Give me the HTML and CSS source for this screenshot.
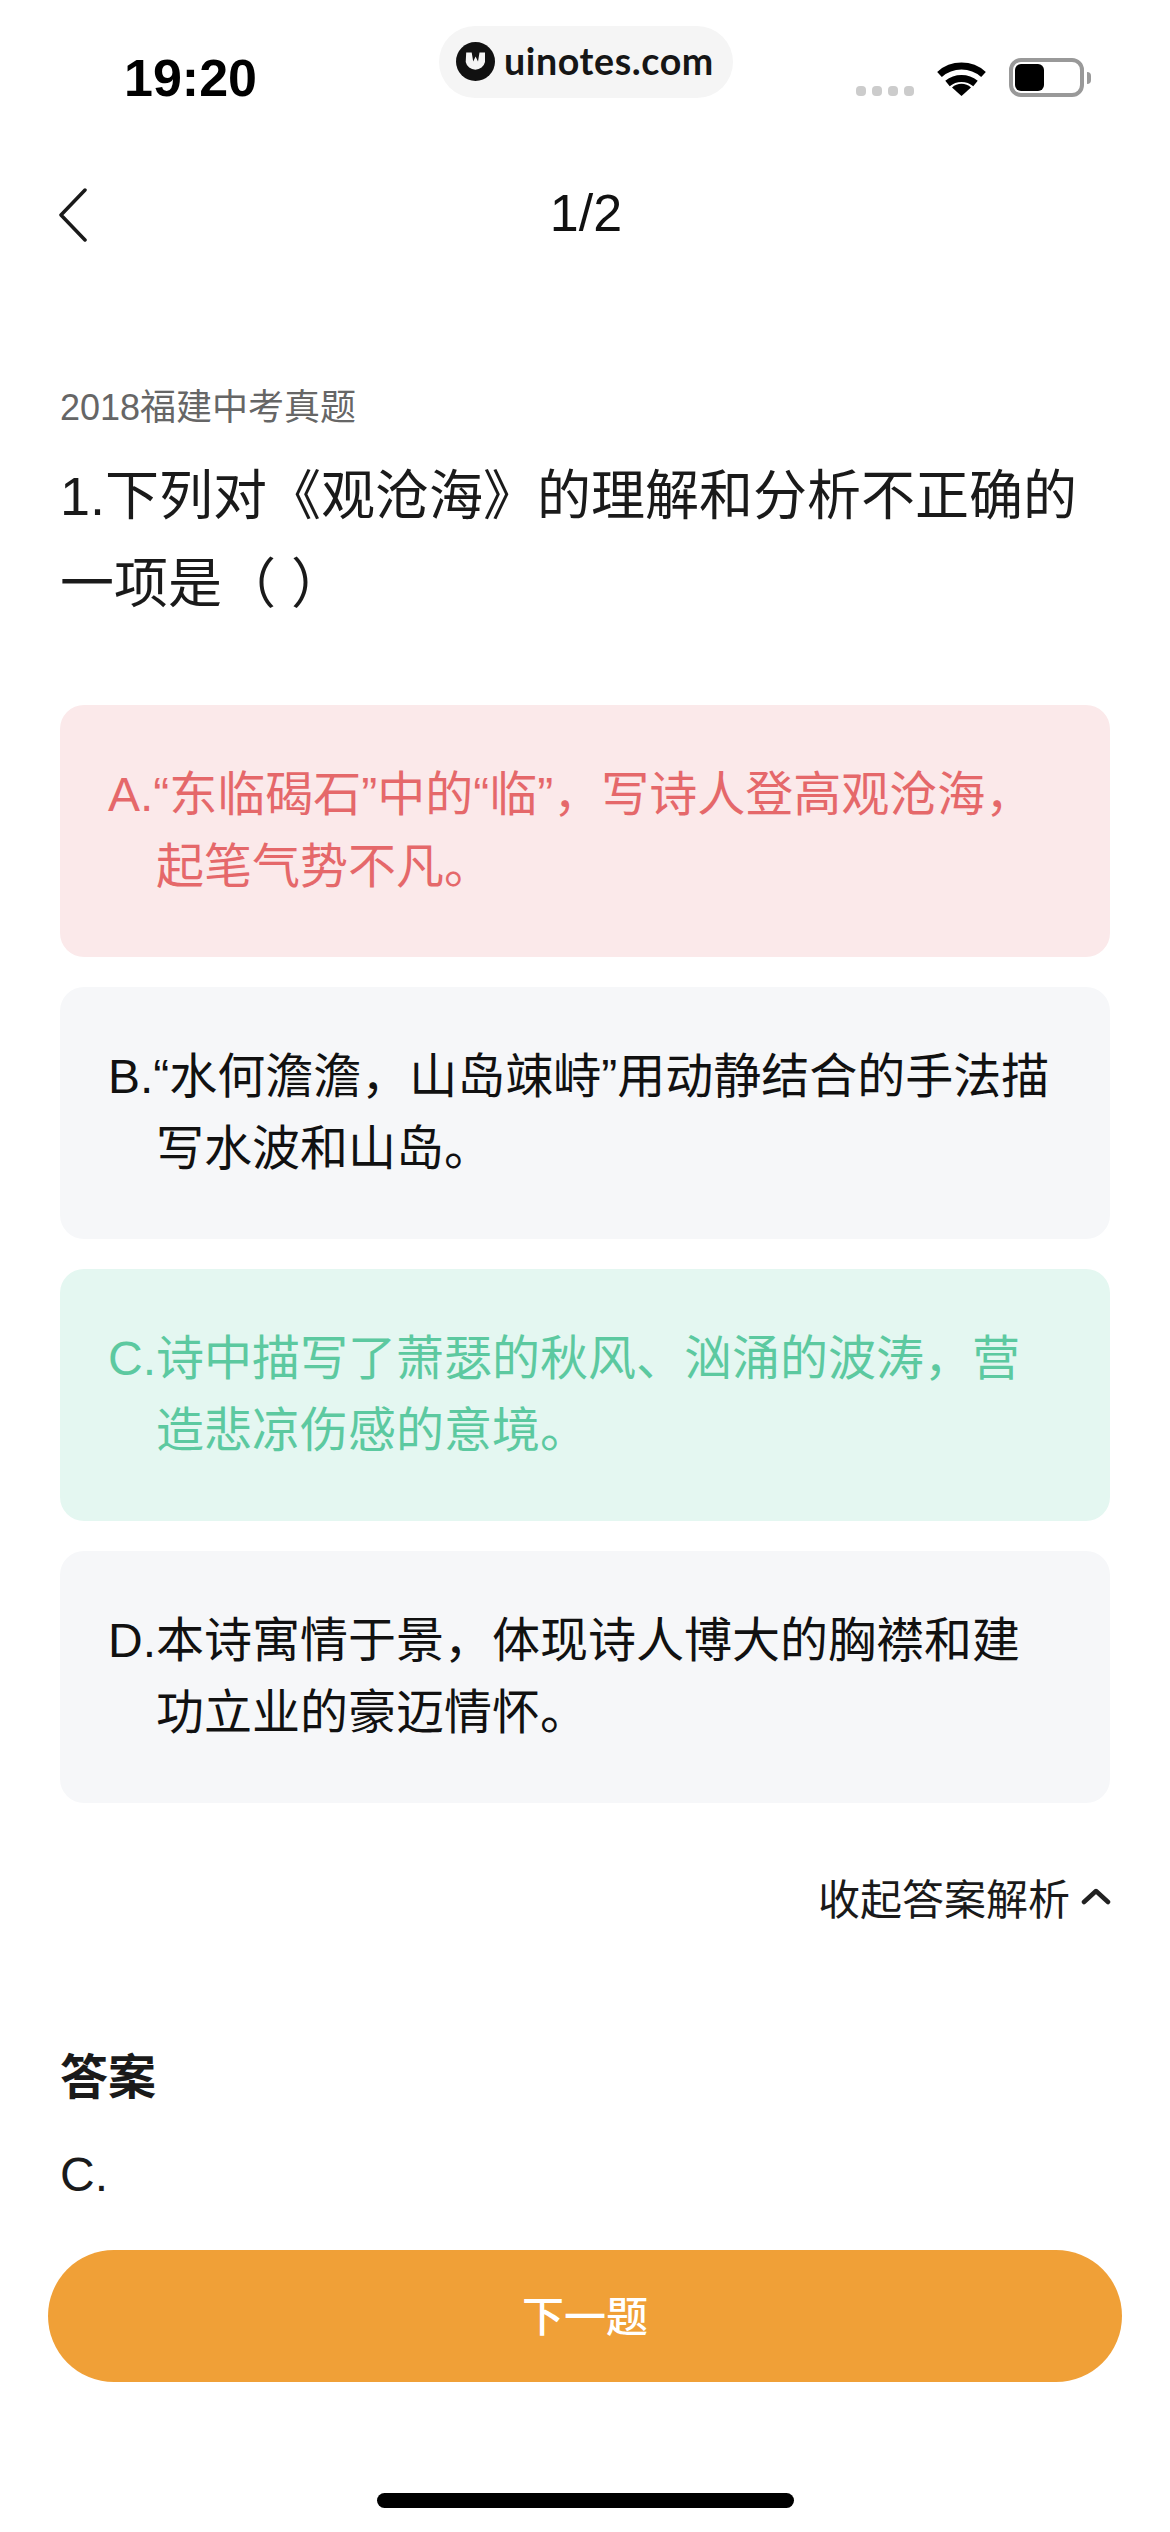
FILE: index.html
```html
<!DOCTYPE html>
<html lang="zh-CN">
<head>
<meta charset="utf-8">
<title>1/2</title>
<link rel="stylesheet" href="styles.css">
</head>
<body>
<div class="page">
  <header class="status">
    <div class="time">19:20</div>
    <div class="pill">
      <svg class="logo" viewBox="0 0 39 39" aria-hidden="true">
        <circle cx="19.5" cy="19.5" r="19.5" fill="#111"/>
        <path d="M10.2 10.5h5.5l1.5 9 2.4-5 2.4 5 1.5-9h5.5v9.5a9.9 9.9 0 0 1-19.3 0z" fill="#f5f5f5"/>
      </svg>
      <span class="pill-text">uinotes.com</span>
    </div>
    <div class="indicators">
      <div class="dots"><i></i><i></i><i></i><i></i></div>
      <svg class="wifi" viewBox="0 0 51 37" aria-hidden="true">
        <path d="M3.5 15.5a33 33 0 0 1 44 0" fill="none" stroke="#000" stroke-width="7"/>
        <path d="M11.5 24.5a22 22 0 0 1 28 0" fill="none" stroke="#000" stroke-width="7"/>
        <path d="M25.5 37L16 28.5a14 14 0 0 1 19 0z" fill="#000"/>
      </svg>
      <div class="battery"><div class="battery-level"></div></div>
      <div class="battery-nub"></div>
    </div>
  </header>

  <nav class="nav">
    <svg class="back" viewBox="0 0 30 54" aria-hidden="true">
      <path d="M27 2L3 27l24 25" fill="none" stroke="#1a1a1a" stroke-width="3.5" stroke-linecap="round" stroke-linejoin="round"/>
    </svg>
    <div class="nav-title">1/2</div>
  </nav>

  <main class="content">
    <div class="source">2018福建中考真题</div>
    <h1 class="question">1.下列对《观沧海》的理解和分析不正确的<br>一项是（ ）</h1>

    <div class="options">
      <div class="option option-wrong">A.“东临碣石”中的“临”，写诗人登高观沧海，<br>起笔气势不凡。</div>
      <div class="option">B.“水何澹澹，山岛竦峙”用动静结合的手法描<br>写水波和山岛。</div>
      <div class="option option-right">C.诗中描写了萧瑟的秋风、汹涌的波涛，营<br>造悲凉伤感的意境。</div>
      <div class="option">D.本诗寓情于景，体现诗人博大的胸襟和建<br>功立业的豪迈情怀。</div>
    </div>

    <div class="toggle">
      <span>收起答案解析</span>
      <svg class="chev" viewBox="0 0 30 18" aria-hidden="true">
        <path d="M3 15L15 4l12 11" fill="none" stroke="#222" stroke-width="4.5" stroke-linecap="round" stroke-linejoin="round"/>
      </svg>
    </div>

    <h2 class="answer-title">答案</h2>
    <div class="answer">C.</div>
  </main>

  <div class="next">下一题</div>
  <div class="home"></div>
</div>
</body>
</html>
```

FILE: styles.css
```css
* { box-sizing: border-box; }
html, body { margin: 0; padding: 0; background: #fff; }
.page {
  width: 1170px;
  height: 2532px;
  overflow: hidden;
  font-family: "Liberation Sans", "Noto Sans CJK SC", sans-serif;
  color: #1a1a1a;
  display: flex;
  flex-direction: column;
}

/* status bar */
.status {
  display: flex;
  align-items: flex-start;
  height: 72px;
  margin-top: 26px;
  padding-left: 124px;
}
.time {
  width: 315px;
  font-size: 52px;
  font-weight: 700;
  line-height: 52px;
  margin-top: 26px;
  color: #000;
}
.pill {
  width: 294px;
  height: 72px;
  border-radius: 36px;
  background: #f5f5f5;
  display: flex;
  align-items: center;
  padding-left: 17px;
  gap: 9px;
}
.logo { width: 39px; height: 39px; flex: none; margin-top: -1px; }
.pill-text {
  font-family: Lato, sans-serif;
  font-weight: 700;
  font-size: 37.6px;
  letter-spacing: 0.6px;
  color: #161616;
  margin-top: -4px;
}
.indicators {
  display: flex;
  align-items: flex-start;
  margin-left: 123px;
  margin-top: 32px;
}
.dots { display: flex; gap: 6px; margin-top: 28px; }
.dots i { width: 10px; height: 10px; border-radius: 4px; background: #ccc; display: block; }
.wifi { width: 51px; height: 37px; margin-left: 22px; margin-top: 1px; }
.battery {
  width: 75px;
  height: 39px;
  margin-left: 22px;
  border: 4px solid #999;
  border-radius: 12px;
  padding: 2px;
}
.battery-level { width: 29px; height: 27px; border-radius: 6px; background: #000; }
.battery-nub {
  width: 4px;
  height: 12px;
  margin: 14px 0 0 3px;
  background: #999;
  border-radius: 0 6px 6px 0;
}

/* nav */
.nav {
  margin-top: 65px;
  height: 100px;
  display: flex;
  align-items: center;
  justify-content: center;
  position: relative;
  padding-left: 2px;
}
.back { position: absolute; left: 58px; top: 25px; width: 30px; height: 54px; }
.nav-title { font-size: 52px; line-height: 100px; color: #111; }

/* content */
.content { padding: 0 60px; flex: 1; }
.source {
  margin-top: 120px;
  font-size: 36px;
  line-height: 50px;
  color: #666;
}
.question {
  margin: 19px 0 0;
  font-size: 54px;
  line-height: 88px;
  font-weight: 400;
  color: #1a1a1a;
  white-space: nowrap;
}
.options {
  margin-top: 77px;
  display: flex;
  flex-direction: column;
  gap: 30px;
}
.option {
  height: 252px;
  border-radius: 24px;
  background: #f6f7f9;
  padding: 54px 0 0 96px;
  text-indent: -48px;
  font-size: 48px;
  line-height: 72px;
  color: #111;
  white-space: nowrap;
}
.option-wrong { background: #fbe9ea; color: #e5686a; }
.option-right { background: #e4f7f1; color: #5cc9a0; }

.toggle {
  margin-top: 63px;
  height: 60px;
  display: flex;
  justify-content: flex-end;
  align-items: center;
  gap: 11px;
  font-size: 42px;
  color: #1a1a1a;
}
.chev { width: 30px; height: 18px; margin-right: -1px; }

.answer-title {
  margin: 122px 0 0;
  font-size: 48px;
  line-height: 60px;
  font-weight: 700;
  color: #1a1a1a;
}
.answer {
  margin-top: 37px;
  font-size: 48px;
  line-height: 60px;
  color: #1a1a1a;
}

/* bottom */
.next {
  flex: none;
  margin: 0 48px;
  height: 132px;
  padding-bottom: 6px;
  border-radius: 66px;
  background: #f0a037;
  color: #fff;
  font-size: 42px;
  font-weight: 500;
  display: flex;
  align-items: center;
  justify-content: center;
}
.home {
  flex: none;
  width: 417px;
  height: 15px;
  margin: 111px auto 24px;
  border-radius: 8px;
  background: #000;
}
```
